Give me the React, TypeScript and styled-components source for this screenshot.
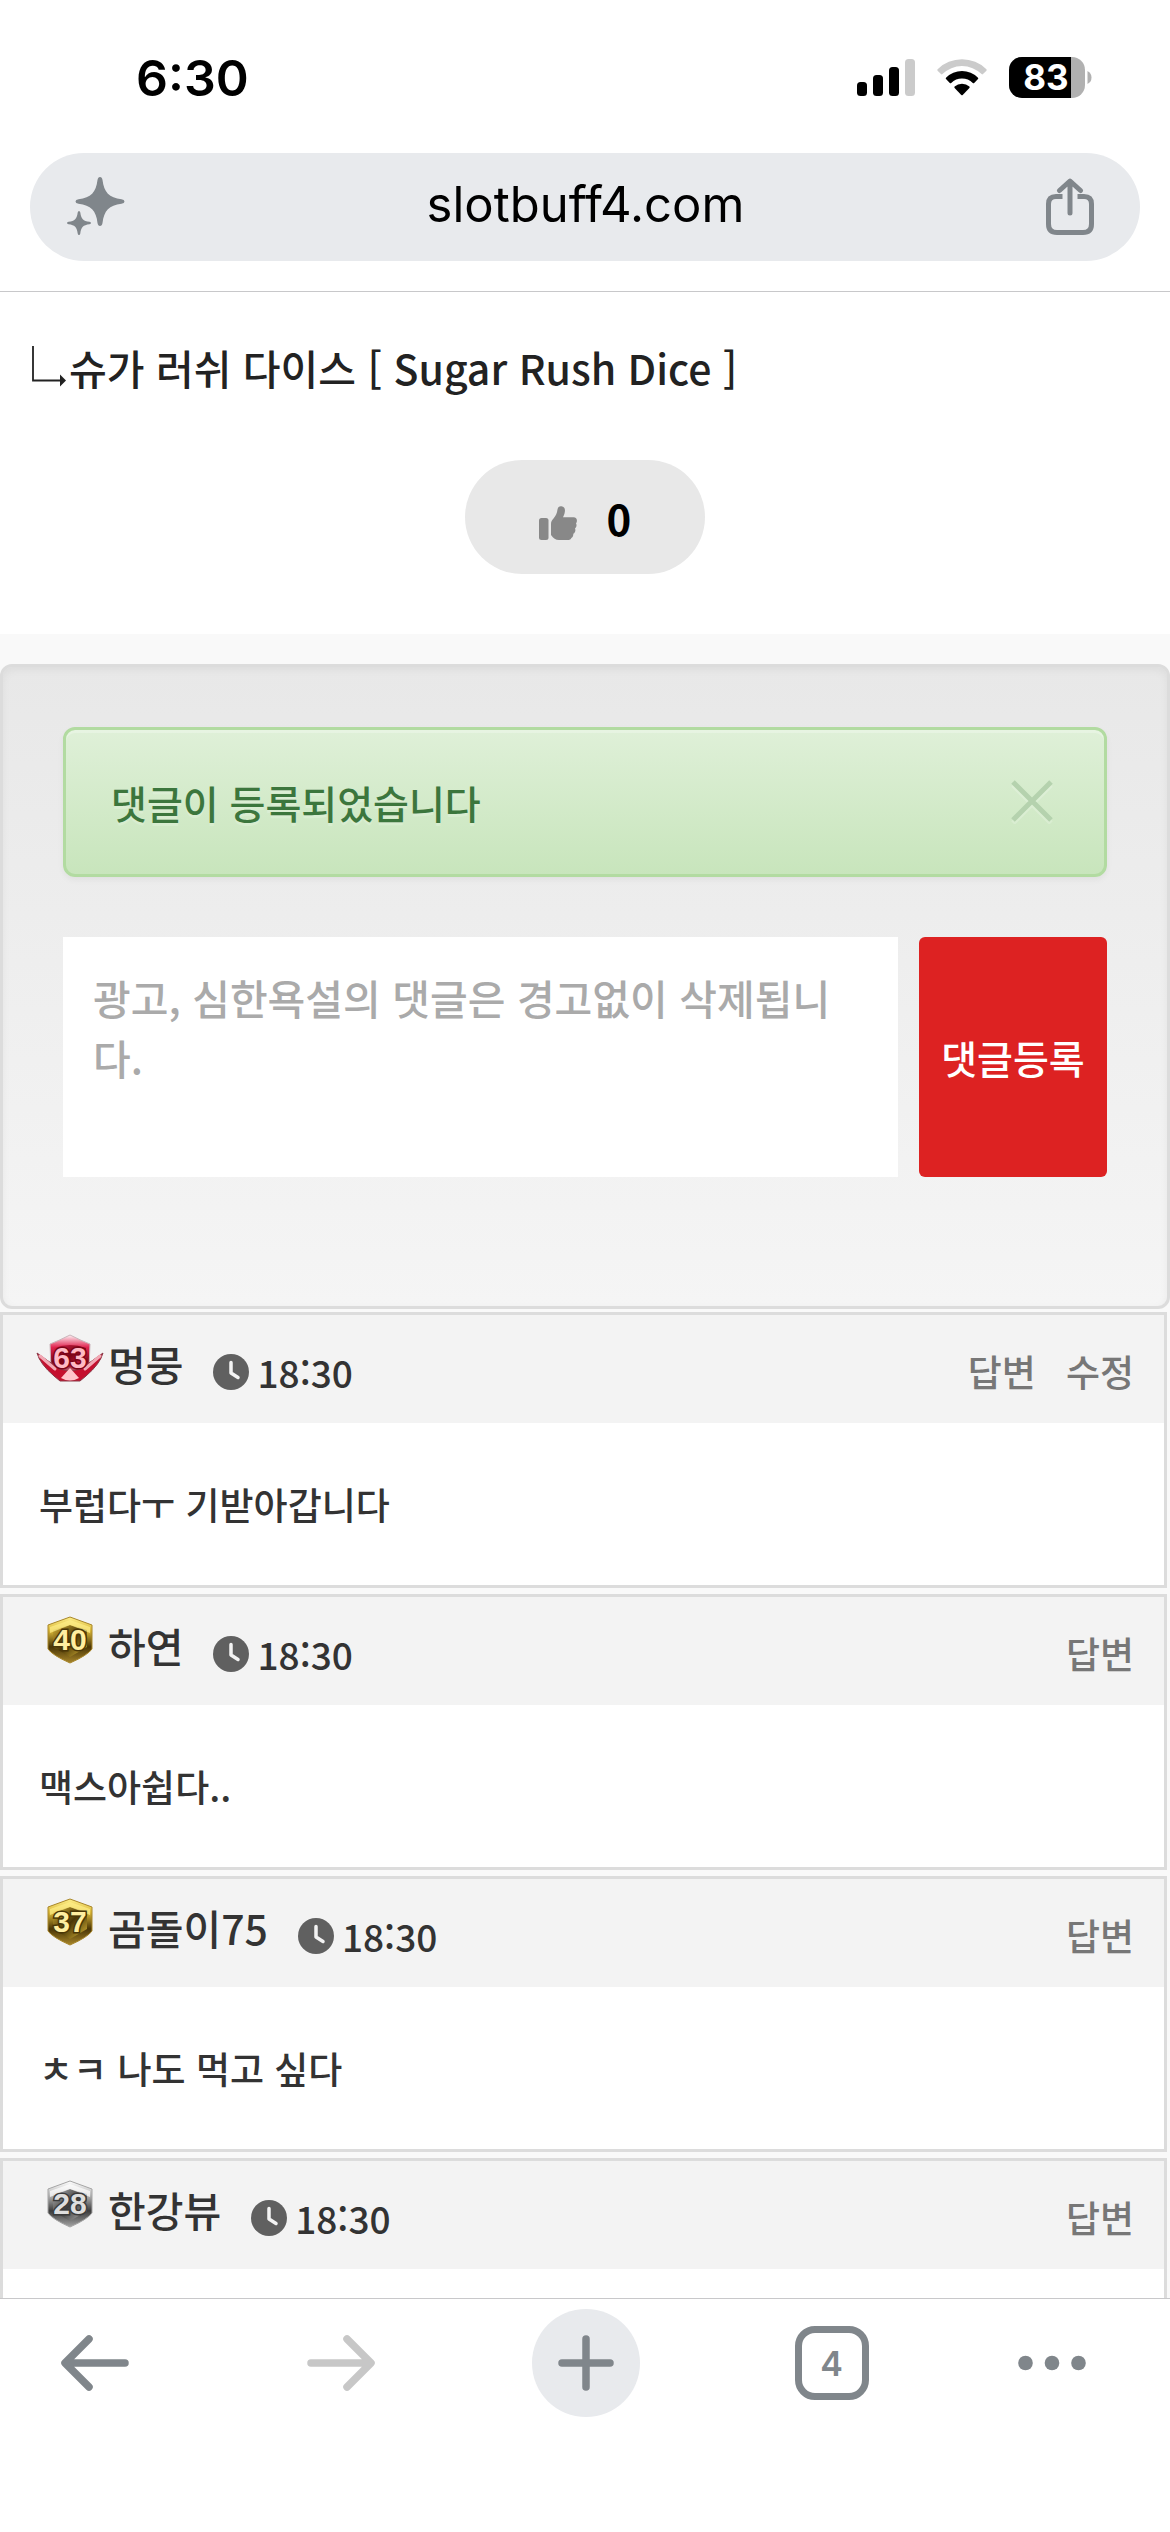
import React, { useState } from 'react';
import styled, { createGlobalStyle } from 'styled-components';

type Tier = 'ruby' | 'gold' | 'silver';

interface Comment {
  level: number;
  tier: Tier;
  name: string;
  time: string;
  text: string;
  actions: string[];
}

const comments: Comment[] = [
  {
    level: 63,
    tier: 'ruby',
    name: '멍뭉',
    time: '18:30',
    text: '부럽다ㅜ 기받아갑니다',
    actions: ['답변', '수정'],
  },
  {
    level: 40,
    tier: 'gold',
    name: '하연',
    time: '18:30',
    text: '맥스아쉽다..',
    actions: ['답변'],
  },
  {
    level: 37,
    tier: 'gold',
    name: '곰돌이75',
    time: '18:30',
    text: 'ㅊㅋ 나도 먹고 싶다',
    actions: ['답변'],
  },
  {
    level: 28,
    tier: 'silver',
    name: '한강뷰',
    time: '18:30',
    text: '',
    actions: ['답변'],
  },
];

// light, main, dark, low, digit
const tiers = {
  ruby: ['#fff3f6', '#e0244f', '#7d0418', '#e8879a', '#ffb9c4'],
  gold: ['#fff08a', '#d9b637', '#4a3606', '#a8862a', '#ffeea0'],
  silver: ['#ffffff', '#b9b9b9', '#3c3c3c', '#a5a5a5', '#dedede'],
};

const GlobalStyle = createGlobalStyle`
  * {
    box-sizing: border-box;
  }

  body {
    margin: 0;
    background: #fff;
    font-family: 'Noto Sans CJK KR', sans-serif;
  }

  button {
    border: none;
    padding: 0;
    background: none;
    font-family: inherit;
    cursor: pointer;
  }

  svg {
    display: block;
    flex-shrink: 0;
  }
`;

const Page = styled.div`
  display: flex;
  flex-direction: column;
  height: 100vh;
`;

const Header = styled.header`
  padding: 0 30px 30px;
  border-bottom: 1px solid #c8c8ca;
  font-family: Inter, sans-serif;
  color: #000;
`;

const StatusBar = styled.div`
  display: flex;
  align-items: center;
  justify-content: space-between;
  height: 153px;
  padding: 2px 48px 0 106px;
  font-size: 50px;
  font-weight: 600;
`;

const StatusIcons = styled.div`
  display: flex;
  align-items: center;
  gap: 22px;
`;

const AddressBar = styled.div`
  display: flex;
  align-items: center;
  justify-content: space-between;
  height: 108px;
  padding: 0 45px 0 36px;
  border-radius: 54px;
  background: #e8eaed;
`;

const Address = styled.button`
  padding-bottom: 6px;
  color: #000;
  font-size: 49px;
`;

const Content = styled.main`
  flex: 1;
  min-height: 0;
  overflow: hidden;
  background: #f9f9f9;
`;

const Article = styled.section`
  padding: 45px 30px 60px;
  background: #fff;
`;

const Title = styled.h1`
  display: flex;
  align-items: center;
  gap: 3px;
  margin: 0 0 63px;
  color: #222;
  font-size: 41px;
  font-weight: 500;
  line-height: 60px;
`;

const LikeButton = styled.button`
  display: flex;
  align-items: center;
  justify-content: center;
  gap: 30px;
  width: 240px;
  height: 114px;
  margin: 0 auto;
  border-radius: 57px;
  background: #e8e8e8;
  color: #000;
  font-size: 42px;
  font-weight: 700;

  svg {
    margin-top: 12px;
  }
`;

const Well = styled.section`
  margin: 30px 0 3px;
  padding: 60px 60px 129px;
  border: 3px solid #dcdcdc;
  border-radius: 12px;
  background: linear-gradient(#e8e8e8, #f5f5f5);
  box-shadow: inset 0 3px 9px rgba(0, 0, 0, 0.05);
`;

const Alert = styled.div`
  display: flex;
  align-items: center;
  justify-content: space-between;
  height: 150px;
  margin-bottom: 60px;
  padding: 0 51px 0 45px;
  border: 3px solid #b2dba1;
  border-radius: 12px;
  background: linear-gradient(#dff0d8, #c8e5bc);
  box-shadow:
    inset 0 3px 0 rgba(255, 255, 255, 0.25),
    0 3px 6px rgba(0, 0, 0, 0.05);
  color: #3c763d;
  font-size: 39px;
  font-weight: 500;
  text-shadow: 0 3px 0 rgba(255, 255, 255, 0.2);
`;

const CommentForm = styled.form`
  display: flex;
  gap: 21px;
  height: 240px;
`;

const CommentInput = styled.textarea`
  flex: 1;
  min-width: 0;
  padding: 30px;
  border: none;
  border-radius: 0;
  background: #fff;
  color: #333;
  font-family: inherit;
  font-size: 41px;
  font-weight: 500;
  line-height: 60px;
  resize: none;

  &::placeholder {
    color: #aaa;
    opacity: 1;
  }
`;

const SubmitButton = styled.button`
  width: 188px;
  border-radius: 6px;
  background: #dd2222;
  color: #fff;
  font-size: 39px;
  font-weight: 500;
`;

const CommentCard = styled.article`
  margin: 0 3px 6px 0;
  border: 3px solid #dcdcdc;
  background: #fff;
  color: #333;
`;

const CommentHeader = styled.header`
  display: flex;
  align-items: center;
  height: 108px;
  padding: 0 30px 0 33px;
  background: #f3f3f3;

  > svg {
    margin-bottom: 22px;
  }
`;

const Name = styled.strong`
  margin: 0 30px 12px 4px;
  font-size: 41px;
  font-weight: 500;
  line-height: 60px;
`;

const Time = styled.time`
  display: flex;
  align-items: center;
  gap: 8px;
  flex: 1;
  margin-top: 6px;
  font-size: 37px;
  font-weight: 500;
  line-height: 54px;
`;

const Actions = styled.div`
  display: flex;
  gap: 30px;
  margin-top: 4px;
`;

const ActionButton = styled.button`
  color: #777;
  font-size: 37px;
  font-weight: 500;
  line-height: 54px;
`;

const CommentBody = styled.p`
  height: 162px;
  margin: 0;
  padding: 54px 36px;
  font-size: 37px;
  font-weight: 500;
  line-height: 54px;
`;

const Toolbar = styled.nav`
  display: flex;
  justify-content: space-between;
  height: 234px;
  padding: 10px 84px 0 36px;
  border-top: 1px solid #c8c8ca;
  background: #fff;
  font-family: Inter, sans-serif;
`;

const ToolButton = styled.button<{ $width?: number }>`
  display: flex;
  align-items: center;
  justify-content: center;
  width: ${(props) => props.$width || 118}px;
  height: 108px;
  color: #80868b;

  &:disabled {
    color: #c7c7c7;
  }
`;

const PlusCircle = styled.span`
  display: flex;
  align-items: center;
  justify-content: center;
  width: 108px;
  height: 108px;
  border-radius: 50%;
  background: #e8eaed;
`;

const TabCount = styled.span`
  display: flex;
  align-items: center;
  justify-content: center;
  width: 74px;
  height: 74px;
  border: 7px solid #80868b;
  border-radius: 20px;
  font-size: 34px;
  font-weight: 600;
`;

const SignalIcon = () => (
  <svg width='58' height='38' viewBox='0 0 58 38'>
    <rect x='0' y='23' width='10' height='14' rx='3.5' />
    <rect x='16' y='16' width='10' height='21' rx='3.5' />
    <rect x='32' y='8' width='10' height='29' rx='3.5' />
    <rect x='48' y='0' width='10' height='37' rx='3.5' fill='#cbcbcb' />
  </svg>
);

const WifiIcon = () => (
  <svg width='50' height='38' viewBox='0 0 50 38'>
    <path
      d='M.6 10.200A35 35 0 0 1 49.400 10.200Q50 11 49.400 11.700L46 15.100Q45.300 15.700 44.600 15.100A28 28 0 0 0 5.400 15.100Q4.700 15.700 4 15.100L.6 11.700Q0 11 .6 10.200Z'
      fill='#cbcbcb'
    />
    <path d='M9 18.700A22.600 22.600 0 0 1 41 18.700Q41.600 19.400 41 20.100L37.200 24Q36.500 24.600 35.800 24A15.500 15.500 0 0 0 14.200 24Q13.500 24.600 12.800 24L9 20.100Q8.400 19.400 9 18.700Z' />
    <path d='M17.600 27.500A11 11 0 0 1 32.400 27.500Q33 28.200 32.400 28.900L25.700 36Q25 36.700 24.300 36L17.600 28.900Q17 28.200 17.600 27.500Z' />
  </svg>
);

const BatteryIcon = () => (
  <svg width='83' height='42' viewBox='0 0 83 42'>
    <clipPath id='battery'>
      <rect width='76' height='41' rx='13' />
    </clipPath>
    <g clipPath='url(#battery)'>
      <rect width='76' height='41' fill='#b1b1b1' />
      <rect width='62' height='41' fill='#000' />
    </g>
    <path d='M78.500 14Q82.500 16 82.500 20.500Q82.500 25 78.500 27Z' fill='#b1b1b1' />
    <text
      x='37'
      y='33'
      textAnchor='middle'
      fill='#fff'
      fontSize='35'
      fontWeight='700'
    >
      83
    </text>
  </svg>
);

const SparkleIcon = () => (
  <svg width='60' height='60' viewBox='0 0 60 60' fill='#80868b'>
    <path d='M34 0Q36 0 36.500 3C38 15.500 43 20.500 55.500 22.200Q58.500 22.800 58.500 24.500Q58.500 26.200 55.500 26.800C43 28.500 38 33.500 36.500 46Q36 49 34 49Q32 49 31.500 46C30 33.500 25 28.500 12.500 26.800Q9.500 26.200 9.500 24.500Q9.500 22.800 12.500 22.200C25 20.500 30 15.500 31.500 3Q32 0 34 0Z' />
    <path d='M13 34Q14 34 14.300 35.500C15.200 42 17 44 23.500 44.800Q25 45.100 25 46Q25 46.900 23.500 47.200C17 48 15.200 50 14.300 56.500Q14 58 13 58Q12 58 11.700 56.500C10.800 50 9 48 2.500 47.200Q1 46.900 1 46Q1 45.100 2.500 44.800C9 44 10.800 42 11.700 35.500Q12 34 13 34Z' />
  </svg>
);

const ShareIcon = () => (
  <svg
    width='50'
    height='58'
    viewBox='0 0 50 58'
    fill='none'
    stroke='#80868b'
    strokeWidth='5'
  >
    <path d='M17.500 18.500H11Q3.500 18.500 3.500 26V46Q3.500 54.500 12 54.500H38Q46.500 54.500 46.500 46V26Q46.500 18.500 39 18.500H32.500' />
    <path
      d='M25 35V4M14.500 12.500L25 3L35.500 12.500'
      strokeLinecap='round'
      strokeLinejoin='round'
    />
  </svg>
);

const ReplyArrow = () => (
  <svg width='36' height='42' viewBox='0 0 36 42'>
    <path d='M3 0V34.500H31' fill='none' stroke='#222' strokeWidth='1.800' />
    <path d='M30 28.500L36 34.500L30 40.500Z' fill='#222' />
  </svg>
);

const ThumbIcon = () => (
  <svg width='38' height='34' viewBox='0 0 38 34' fill='#888'>
    <rect x='0' y='12' width='9.500' height='22' rx='2.500' />
    <path d='M12 29V18C12 15.500 13 14 14.500 12.500C17 9.500 18 7 18.500 3.500C19 .8 20.500 0 22.500 .3C25.500 .8 26.300 3 25.800 6C25.500 8 24.800 9.500 24 11.300H34.500C38 11.300 38.800 15 37 17.300C38 19 37.500 21.300 36 22.500C37 24.500 36 26.800 34.300 27.700C34.500 30 33.500 31.500 32.300 32C32 33.500 30.500 34 28.500 34H20C16.500 34 14.500 32.500 12 29Z' />
  </svg>
);

const CloseIcon = () => (
  <svg width='42' height='44' viewBox='0 0 42 44' strokeWidth='5' fill='none'>
    <path d='M2 5L40 43M40 5L2 43' stroke='#fff' opacity='.2' />
    <path d='M2 2L40 40M40 2L2 40' stroke='#b5d2ae' />
  </svg>
);

const ClockIcon = () => (
  <svg width='36' height='36' viewBox='0 0 36 36'>
    <circle cx='18' cy='18' r='18' fill='#606060' />
    <path
      d='M18 8.500V19L25 23.500'
      fill='none'
      stroke='#f3f3f3'
      strokeWidth='3.500'
      strokeLinecap='round'
      strokeLinejoin='round'
    />
  </svg>
);

const LevelBadge = ({ level, tier }: { level: number; tier: Tier }) => {
  const [light, main, dark, low, digit] = tiers[tier];
  const id = `badge-${level}`;

  return (
    <svg width='68' height='48' viewBox='0 0 68 48'>
      <defs>
        <linearGradient id={id} x1='0' y1='0' x2='0' y2='1'>
          <stop offset='0' stopColor={light} />
          <stop offset='.3' stopColor={main} />
          <stop offset='.65' stopColor={dark} />
          <stop offset='1' stopColor={low} />
        </linearGradient>
        <linearGradient id={`${id}-in`} x1='0' y1='0' x2='1' y2='1'>
          <stop offset='0' stopColor={main} />
          <stop offset='.5' stopColor={dark} />
          <stop offset='1' stopColor={main} />
        </linearGradient>
      </defs>
      {tier === 'ruby' ? (
        <>
          <path
            d='M14 10Q22 7 34 1Q46 7 54 10L53 34L46 42H22L15 34Z'
            fill={`url(#${id})`}
            stroke='#c9b4ba'
          />
          <path d='M18 14Q34 8 50 14V33H18Z' fill={`url(#${id}-in)`} />
          <path
            d='M1 19L15 29L23 35L34 37L45 35L53 29L67 19Q64 30 50 42L44 47H24L18 42Q4 30 1 19Z'
            fill='#c5102f'
            stroke='#8a3a48'
          />
          <path
            d='M4 22L19 35M64 22L49 35'
            stroke='#f2a9b5'
            strokeWidth='3'
            strokeLinecap='round'
          />
          <path d='M25 44L34 34L43 44Q34 49 25 44Z' fill='#ffc4cc' />
        </>
      ) : (
        <>
          <path
            d='M34 1L56 9V33Q52 39 34 47Q16 39 12 33V9Z'
            fill={`url(#${id})`}
            stroke={low}
          />
          <path d='M34 9L51 14V31L34 41L17 31V14Z' fill={`url(#${id}-in)`} />
          <path d='M14 17V11L34 4L54 11V17L34 9Z' fill={light} opacity='.7' />
        </>
      )}
      <text
        x='34'
        y='34'
        textAnchor='middle'
        fontFamily='Liberation Sans, sans-serif'
        fontSize='30'
        fontWeight='700'
        fill={digit}
        stroke={dark}
        strokeWidth='3'
        paintOrder='stroke'
      >
        {level}
      </text>
    </svg>
  );
};

const ArrowIcon = ({ forward }: { forward?: boolean }) => (
  <svg
    width='68'
    height='56'
    viewBox='0 0 68 56'
    fill='none'
    stroke='currentColor'
    strokeWidth='7.500'
    strokeLinecap='round'
    strokeLinejoin='round'
  >
    {forward ? (
      <path d='M4 28H63M40 4L64 28L40 52' />
    ) : (
      <path d='M64 28H5M28 4L4 28L28 52' />
    )}
  </svg>
);

const PlusIcon = () => (
  <svg width='56' height='56' viewBox='0 0 56 56'>
    <path
      d='M28 4V52M4 28H52'
      stroke='currentColor'
      strokeWidth='7.500'
      strokeLinecap='round'
    />
  </svg>
);

const DotsIcon = () => (
  <svg width='68' height='16' viewBox='0 0 68 16' fill='currentColor'>
    <circle cx='7.500' cy='8' r='7.300' />
    <circle cx='34' cy='8' r='7.300' />
    <circle cx='60.500' cy='8' r='7.300' />
  </svg>
);

const App = () => {
  const [showAlert, setShowAlert] = useState(true);
  const [comment, setComment] = useState('');

  const handleSubmit = (e: React.FormEvent<HTMLFormElement>) => {
    e.preventDefault();
    setComment('');
    setShowAlert(true);
  };

  return (
    <Page lang='ko'>
      <GlobalStyle />
      <Header>
        <StatusBar>
          <span>6:30</span>
          <StatusIcons>
            <SignalIcon />
            <WifiIcon />
            <BatteryIcon />
          </StatusIcons>
        </StatusBar>
        <AddressBar>
          <button type='button'>
            <SparkleIcon />
          </button>
          <Address type='button'>slotbuff4.com</Address>
          <button type='button'>
            <ShareIcon />
          </button>
        </AddressBar>
      </Header>
      <Content>
        <Article>
          <Title>
            <ReplyArrow />
            슈가 러쉬 다이스 [ Sugar Rush Dice ]
          </Title>
          <LikeButton type='button'>
            <ThumbIcon />0
          </LikeButton>
        </Article>
        <Well>
          {showAlert && (
            <Alert role='alert'>
              댓글이 등록되었습니다
              <button type='button' onClick={() => setShowAlert(false)}>
                <CloseIcon />
              </button>
            </Alert>
          )}
          <CommentForm onSubmit={handleSubmit}>
            <CommentInput
              name='comment'
              value={comment}
              placeholder='광고, 심한욕설의 댓글은 경고없이 삭제됩니다.'
              onChange={(e) => setComment(e.target.value)}
            />
            <SubmitButton type='submit'>댓글등록</SubmitButton>
          </CommentForm>
        </Well>
        {comments.map((item) => (
          <CommentCard key={item.level}>
            <CommentHeader>
              <LevelBadge level={item.level} tier={item.tier} />
              <Name>{item.name}</Name>
              <Time>
                <ClockIcon />
                {item.time}
              </Time>
              <Actions>
                {item.actions.map((action) => (
                  <ActionButton key={action} type='button'>
                    {action}
                  </ActionButton>
                ))}
              </Actions>
            </CommentHeader>
            <CommentBody>{item.text}</CommentBody>
          </CommentCard>
        ))}
      </Content>
      <Toolbar>
        <ToolButton type='button'>
          <ArrowIcon />
        </ToolButton>
        <ToolButton type='button' disabled>
          <ArrowIcon forward />
        </ToolButton>
        <ToolButton type='button'>
          <PlusCircle>
            <PlusIcon />
          </PlusCircle>
        </ToolButton>
        <ToolButton type='button'>
          <TabCount>4</TabCount>
        </ToolButton>
        <ToolButton type='button' $width={68}>
          <DotsIcon />
        </ToolButton>
      </Toolbar>
    </Page>
  );
};

export default App;
